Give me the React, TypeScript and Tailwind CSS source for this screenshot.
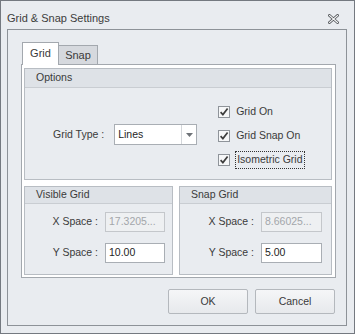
import React from 'react';

const Check: React.FC = () => (
  <span className="flex h-[12px] w-[12px] shrink-0 items-center justify-center border border-[#8f949a] bg-[#f6f7f8]">
    <svg width="10" height="10" viewBox="0 0 10 10">
      <path d="M1.6 5.2 L3.9 7.6 L8.6 1.6" fill="none" stroke="#3d3d3d" strokeWidth="1.7" />
    </svg>
  </span>
);

const GroupBox: React.FC<{ title: string; head: string; className?: string; children: React.ReactNode }> = ({
  title,
  head,
  className,
  children,
}) => (
  <div className={`flex flex-col border border-[#b8bdc3] bg-[#e9ecf0] ${className ?? ''}`}>
    <div className={`flex items-center border-b border-[#c9cdd2] bg-[#dee2e7] pl-[11px] ${head}`}>{title}</div>
    {children}
  </div>
);

const Field: React.FC<{ value: string; disabled?: boolean; w: string }> = ({ value, disabled, w }) => (
  <div
    className={`flex h-[20px] items-center pl-[3px] ${w} border ${
      disabled ? 'border-[#c4c7cb] bg-[#eef0f2] text-[#a3a6aa]' : 'border-[#a9aeb4] bg-white text-[#1e1e1e]'
    }`}
  >
    {value}
  </div>
);

const Row: React.FC<{ label: string; children: React.ReactNode }> = ({ label, children }) => (
  <div className="flex items-center gap-[7px]">
    <span>{label}</span>
    {children}
  </div>
);

export default function App() {
  return (
    <div className="flex h-[334px] w-[355px] flex-col border border-[#747980] bg-[#e9ecf0] font-['Liberation_Sans',Arial,sans-serif] text-[10.5px] text-[#3a3a3a]">
      {/* title bar */}
      <div className="flex h-[28px] items-center justify-between pl-[6px] pr-[15px] pt-[6px]">
        <span className="text-[11px] text-[#3c3c3c]">Grid &amp; Snap Settings</span>
        <svg width="11" height="10" viewBox="0 0 11 10" className="mt-[1px]">
          <path d="M1.5 1.5 L9.5 8.5 M9.5 1.5 L1.5 8.5" stroke="#55585c" strokeWidth="2.8" strokeLinecap="square" />
          <path d="M1.5 1.5 L9.5 8.5 M9.5 1.5 L1.5 8.5" stroke="#f6f7f8" strokeWidth="1.1" strokeLinecap="square" />
        </svg>
      </div>

      {/* frame */}
      <div className="ml-[6px] mr-[7px] mb-[7px] flex flex-1 flex-col border border-[#8d9298] pl-[13px] pr-[10px] pt-[12px]">
        {/* tabs */}
        <div className="relative z-10 -mb-px ml-px flex items-end">
          <div className="flex h-[23px] w-[37px] items-center justify-center border border-b-0 border-[#a3a8ae] bg-white pb-[1px] text-[11px]">
            Grid
          </div>
          <div className="flex h-[20px] w-[39px] items-center justify-center border border-l-0 border-[#a3a8ae] bg-[#d6d9de] text-[11px]">
            Snap
          </div>
        </div>

        {/* tab page */}
        <div className="flex h-[214px] flex-col gap-[6px] border border-[#a3a8ae] bg-white pb-[2px] pl-[2px] pr-[3px] pt-[3px]">
          <GroupBox title="Options" head="h-[19px]" className="h-[112px]">
            <div className="flex flex-1 items-center pl-[28px] pt-[2px]">
              <span>Grid Type :</span>
              <div className="ml-[10px] flex h-[21px] w-[83px] items-center border border-[#a9aeb4] bg-white">
                <span className="flex-1 pl-[3px] text-[#1e1e1e]">Lines</span>
                <span className="flex h-full w-[15px] items-center justify-center border-l border-[#d3d6da]">
                  <svg width="7" height="4" viewBox="0 0 7 4">
                    <path d="M0 0 L7 0 L3.5 4 Z" fill="#6f7378" />
                  </svg>
                </span>
              </div>
              <div className="ml-[21px] flex flex-col pt-[2px]">
                <div className="flex h-[25px] items-center gap-[5px]">
                  <Check />
                  <span className="px-px">Grid On</span>
                </div>
                <div className="flex h-[24px] items-center gap-[5px]">
                  <Check />
                  <span className="px-px">Grid Snap On</span>
                </div>
                <div className="flex h-[24px] items-center gap-[5px]">
                  <Check />
                  <span className="flex h-[18px] items-center border border-dotted border-[#333] px-px">Isometric Grid</span>
                </div>
              </div>
            </div>
          </GroupBox>

          <div className="flex flex-1 gap-[6px]">
            <GroupBox title="Visible Grid" head="h-[17px]" className="w-[149px]">
              <div className="flex flex-col items-end gap-[11px] pr-[7px] pt-[8px]">
                <Row label="X Space :">
                  <Field value="17.3205..." disabled w="w-[60px]" />
                </Row>
                <Row label="Y Space :">
                  <Field value="10.00" w="w-[60px]" />
                </Row>
              </div>
            </GroupBox>
            <GroupBox title="Snap Grid" head="h-[17px]" className="flex-1">
              <div className="flex flex-col items-end gap-[11px] pr-[9px] pt-[8px]">
                <Row label="X Space :">
                  <Field value="8.66025..." disabled w="w-[61px]" />
                </Row>
                <Row label="Y Space :">
                  <Field value="5.00" w="w-[61px]" />
                </Row>
              </div>
            </GroupBox>
          </div>
        </div>

        {/* buttons */}
        <div className="mr-px mt-[11px] flex justify-end gap-[7px]">
          <button className="h-[25px] w-[80px] rounded-[2px] border border-[#b4b8bd] bg-gradient-to-b from-[#f5f6f8] to-[#e7e9ec] text-[#3a3a3a]">
            OK
          </button>
          <button className="h-[25px] w-[80px] rounded-[2px] border border-[#b4b8bd] bg-gradient-to-b from-[#f5f6f8] to-[#e7e9ec] text-[#3a3a3a]">
            Cancel
          </button>
        </div>
      </div>
    </div>
  );
}
